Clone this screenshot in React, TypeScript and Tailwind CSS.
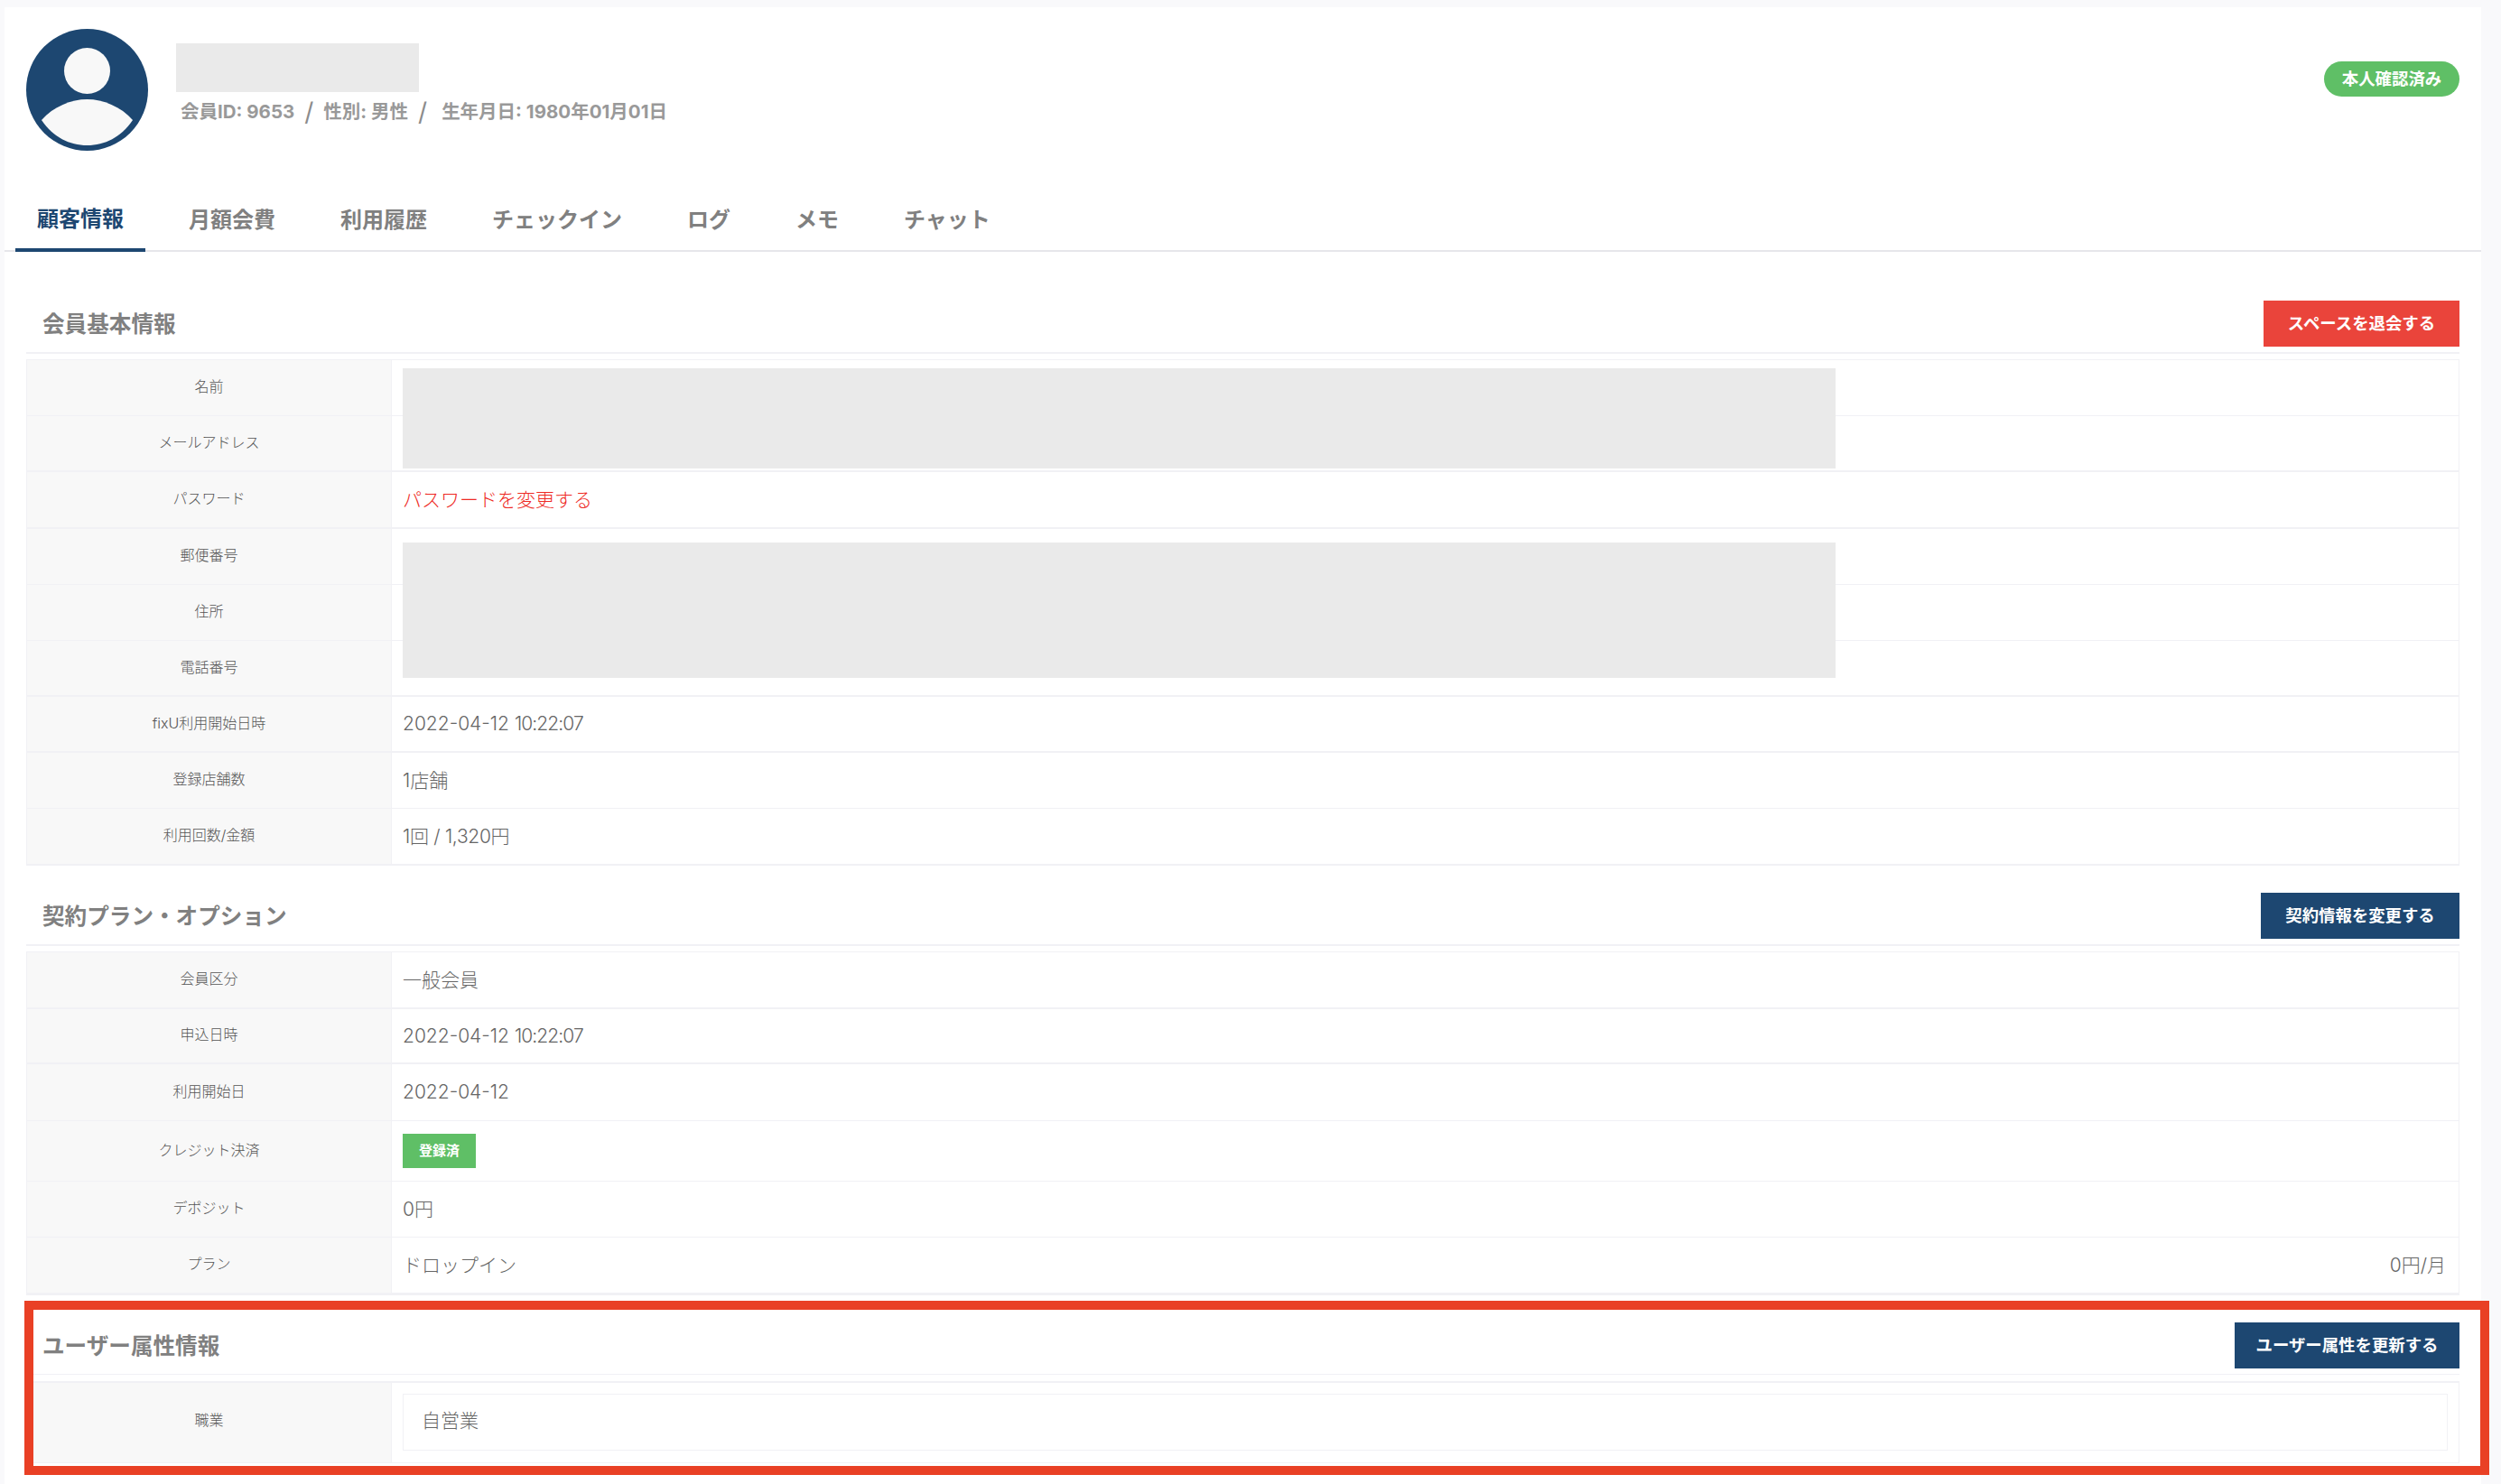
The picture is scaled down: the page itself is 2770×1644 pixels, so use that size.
const font = "font-['Inter','Noto_Sans_CJK_JP',sans-serif]";

type Row = {
  label: string;
  value?: React.ReactNode;
  h: string;
  thick?: boolean;
};

function InfoRow({ label, value, h, thick }: Row) {
  return (
    <div className={`flex ${h} ${thick ? 'border-b-2' : 'border-b'} border-[#f1f1f5]`}>
      <div className="w-[404px] shrink-0 border-r border-[#f1f1f5] bg-[#f8f8f8] flex items-center justify-center text-[16px] font-light text-[#555555] pb-[3px]">
        {label}
      </div>
      <div className="flex-1 flex items-center justify-between pl-[12px] pr-[14px] text-[21px] font-light text-[#666666]">
        {value}
      </div>
    </div>
  );
}

function SectionHead({ title, action, color, w, thin }: { title: string; action: string; color: string; w: string; thin?: boolean }) {
  return (
    <div className={`flex items-center justify-between pb-[6px] pl-[18px] ${thin ? 'border-b' : 'border-b-2'} border-[#f1f1f5]`}>
      <h2 className="pt-[2px] text-[24.6px] font-bold text-[#808080]">{title}</h2>
      <button className={`h-[51px] ${w} ${color} text-white text-[18.4px] font-bold`}>{action}</button>
    </div>
  );
}

function Avatar() {
  return (
    <svg width="135" height="135" viewBox="0 0 135 135" className="shrink-0">
      <circle cx="67.5" cy="67.5" r="67.5" fill="#1d4771" />
      <circle cx="67.5" cy="46.5" r="25.5" fill="#f8f8f8" />
      <path d="M17 101 C30 86 50 78 67.5 78 C85 78 105 86 118 101 C105 120 87 129 67.5 129 C48 129 30 120 17 101 Z" fill="#f8f8f8" />
    </svg>
  );
}

function DateTime({ date, time }: { date: string; time: string }) {
  return (
    <span>
      {date} <span className="tracking-[-0.9px]">{time}</span>
    </span>
  );
}

const tabs = ['顧客情報', '月額会費', '利用履歴', 'チェックイン', 'ログ', 'メモ', 'チャット'];

export default function App() {
  return (
    <div className={`relative min-h-[1644px] bg-[#f9f9fb] pt-[8px] pl-[5px] pr-[22px] ${font}`}>
      <div className="bg-white min-h-[1636px]">
        <div className="h-[200px] flex items-start px-[24px] pt-[24px]">
          <Avatar />
          <div className="ml-[31px] pt-[16px]">
            <div className="w-[269px] h-[54px] bg-[#eaeaea]" />
            <div className="mt-[8px] pl-[5px] flex items-center text-[20.5px] font-bold text-[#999999] leading-[28px]">
              <span>会員ID: 9653</span>
              <span className="mx-[11px] font-normal text-[28px] text-[#8c8c8c]">/</span>
              <span>性別: 男性</span>
              <span className="ml-[11px] mr-[16px] font-normal text-[28px] text-[#8c8c8c]">/</span>
              <span>生年月日: 1980年01月01日</span>
            </div>
          </div>
          <span className="ml-auto mt-[36px] h-[39px] w-[150px] rounded-full bg-[#5fbf66] text-white text-[18.4px] font-bold flex items-center justify-center">
            本人確認済み
          </span>
        </div>

        <div className="flex gap-[24px] h-[71px] pl-[12px] border-b-2 border-[#e6e6ea]">
          {tabs.map((t, i) => (
            <div
              key={t}
              className={
                i === 0
                  ? 'px-[24px] pt-[2px] -mb-[2px] flex items-center border-b-4 border-[#1d4771] text-[24px] font-bold text-[#1d4771]'
                  : 'px-[24px] pt-[2px] flex items-center text-[24px] font-bold text-[#808080]'
              }
            >
              {t}
            </div>
          ))}
        </div>

        <div className="px-[24px] pt-[54px]">
          <SectionHead title="会員基本情報" action="スペースを退会する" color="bg-[#ea443b]" w="w-[217px]" />
          <div className="relative mt-[6px] border border-[#f1f1f5]">
            <InfoRow label="名前" h="h-[62px]" />
            <InfoRow label="メールアドレス" h="h-[62px]" thick />
            <InfoRow label="パスワード" h="h-[63px]" thick value={<span className="text-[#ee2a25]">パスワードを変更する</span>} />
            <InfoRow label="郵便番号" h="h-[62px]" />
            <InfoRow label="住所" h="h-[62px]" />
            <InfoRow label="電話番号" h="h-[62px]" thick />
            <InfoRow label="fixU利用開始日時" h="h-[62px]" thick value={<DateTime date="2022-04-12" time="10:22:07" />} />
            <InfoRow label="登録店舗数" h="h-[62px]" value="1店舗" />
            <InfoRow label="利用回数/金額" h="h-[62px]" value={<span className="tracking-[-0.3px]">1回 / 1,320円</span>} />
            <div className="absolute left-[416px] top-[9px] w-[1587px] h-[111px] bg-[#eaeaea]" />
            <div className="absolute left-[416px] top-[202px] w-[1587px] h-[150px] bg-[#eaeaea]" />
          </div>

          <div className="mt-[30px]">
            <SectionHead title="契約プラン・オプション" action="契約情報を変更する" color="bg-[#1d4771]" w="w-[220px]" />
          </div>
          <div className="mt-[6px] border border-[#f1f1f5]">
            <InfoRow label="会員区分" h="h-[63px]" thick value="一般会員" />
            <InfoRow label="申込日時" h="h-[61px]" thick value={<DateTime date="2022-04-12" time="10:22:07" />} />
            <InfoRow label="利用開始日" h="h-[63px]" value="2022-04-12" />
            <InfoRow
              label="クレジット決済"
              h="h-[67px]"
              value={
                <span className="w-[81px] h-[38px] bg-[#5fbf66] text-white text-[15px] font-bold flex items-center justify-center">
                  登録済
                </span>
              }
            />
            <InfoRow label="デポジット" h="h-[62px]" value="0円" />
            <InfoRow
              label="プラン"
              h="h-[63px]"
              thick
              value={
                <>
                  <span>ドロップイン</span>
                  <span>0円/月</span>
                </>
              }
            />
          </div>

          <div className="mt-[30px]">
            <SectionHead title="ユーザー属性情報" action="ユーザー属性を更新する" color="bg-[#1d4771]" w="w-[249px]" thin />
          </div>
          <div className="mt-[7px] border border-[#f1f1f5] border-t-2">
            <div className="flex h-[88px]">
              <div className="w-[404px] shrink-0 border-r border-[#f1f1f5] bg-[#f8f8f8] flex items-center justify-center text-[16px] font-light text-[#555555] pb-[6px]">
                職業
              </div>
              <div className="flex-1 pl-[12px] pr-[12px] pt-[12px]">
                <div className="h-[63px] border border-[#f1f1f5] flex items-center pl-[20px] pb-[3px] text-[21px] font-light text-[#666666]">
                  自営業
                </div>
              </div>
            </div>
          </div>
        </div>
      </div>

      {/* annotation frame from the original capture */}
      <div className="absolute left-[27px] top-[1441px] w-[2730px] h-[193px] border-[10px] border-[#e94025] pointer-events-none" />
    </div>
  );
}
